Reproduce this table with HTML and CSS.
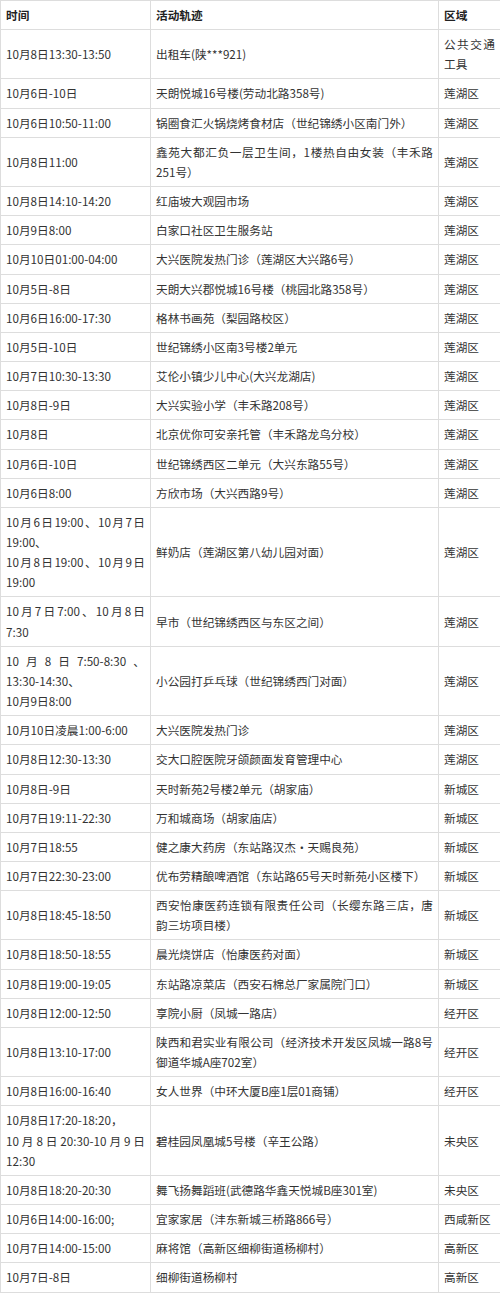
FILE: index.html
```html
<!DOCTYPE html>
<html lang="zh-CN">
<head>
<meta charset="utf-8">
<title>活动轨迹</title>
<link rel="stylesheet" href="styles.css">
</head>
<body>
<table class="trace">
  <colgroup>
    <col class="c-time">
    <col class="c-place">
    <col class="c-area">
  </colgroup>
  <thead>
    <tr><th>时间</th><th>活动轨迹</th><th>区域</th></tr>
  </thead>
  <tbody>
    <tr><td>10月8日13:30-13:50</td><td>出租车(陕***921)</td><td>公共交通工具</td></tr>
    <tr><td>10月6日-10日</td><td>天朗悦城16号楼(劳动北路358号)</td><td>莲湖区</td></tr>
    <tr><td>10月6日10:50-11:00</td><td>锅圈食汇火锅烧烤食材店（世纪锦绣小区南门外）</td><td>莲湖区</td></tr>
    <tr><td>10月8日11:00</td><td>鑫苑大都汇负一层卫生间，1楼热自由女装（丰禾路251号）</td><td>莲湖区</td></tr>
    <tr><td>10月8日14:10-14:20</td><td>红庙坡大观园市场</td><td>莲湖区</td></tr>
    <tr><td>10月9日8:00</td><td>白家口社区卫生服务站</td><td>莲湖区</td></tr>
    <tr><td>10月10日01:00-04:00</td><td>大兴医院发热门诊（莲湖区大兴路6号）</td><td>莲湖区</td></tr>
    <tr><td>10月5日-8日</td><td>天朗大兴郡悦城16号楼（桃园北路358号）</td><td>莲湖区</td></tr>
    <tr><td>10月6日16:00-17:30</td><td>格林书画苑（梨园路校区）</td><td>莲湖区</td></tr>
    <tr><td>10月5日-10日</td><td>世纪锦绣小区南3号楼2单元</td><td>莲湖区</td></tr>
    <tr><td>10月7日10:30-13:30</td><td>艾伦小镇少儿中心(大兴龙湖店)</td><td>莲湖区</td></tr>
    <tr><td>10月8日-9日</td><td>大兴实验小学（丰禾路208号）</td><td>莲湖区</td></tr>
    <tr><td>10月8日</td><td>北京优你可安亲托管（丰禾路龙鸟分校）</td><td>莲湖区</td></tr>
    <tr><td>10月6日-10日</td><td>世纪锦绣西区二单元（大兴东路55号）</td><td>莲湖区</td></tr>
    <tr><td>10月6日8:00</td><td>方欣市场（大兴西路9号）</td><td>莲湖区</td></tr>
    <tr><td>10月6日19:00、10月7日19:00、<br>10月8日19:00、10月9日19:00</td><td>鲜奶店（莲湖区第八幼儿园对面）</td><td>莲湖区</td></tr>
    <tr><td>10月7日7:00、10月8日7:30</td><td>早市（世纪锦绣西区与东区之间）</td><td>莲湖区</td></tr>
    <tr><td>10月8日7:50-8:30、<span class="nb">13:30-14:30、</span><br>10月9日8:00</td><td>小公园打乒乓球（世纪锦绣西门对面）</td><td>莲湖区</td></tr>
    <tr><td>10月10日凌晨1:00-6:00</td><td>大兴医院发热门诊</td><td>莲湖区</td></tr>
    <tr><td>10月8日12:30-13:30</td><td>交大口腔医院牙颌颜面发育管理中心</td><td>莲湖区</td></tr>
    <tr><td>10月8日-9日</td><td>天时新苑2号楼2单元（胡家庙）</td><td>新城区</td></tr>
    <tr><td>10月7日19:11-22:30</td><td>万和城商场（胡家庙店）</td><td>新城区</td></tr>
    <tr><td>10月7日18:55</td><td>健之康大药房（东站路汉杰·天赐良苑）</td><td>新城区</td></tr>
    <tr><td>10月7日22:30-23:00</td><td>优布劳精酿啤酒馆（东站路65号天时新苑小区楼下）</td><td>新城区</td></tr>
    <tr><td>10月8日18:45-18:50</td><td>西安怡康医药连锁有限责任公司（长缨东路三店，唐韵三坊项目楼）</td><td>新城区</td></tr>
    <tr><td>10月8日18:50-18:55</td><td>晨光烧饼店（怡康医药对面）</td><td>新城区</td></tr>
    <tr><td>10月8日19:00-19:05</td><td>东站路凉菜店（西安石棉总厂家属院门口）</td><td>新城区</td></tr>
    <tr><td>10月8日12:00-12:50</td><td>享院小厨（凤城一路店）</td><td>经开区</td></tr>
    <tr><td>10月8日13:10-17:00</td><td>陕西和君实业有限公司（经济技术开发区凤城一路8号御道华城A座702室）</td><td>经开区</td></tr>
    <tr><td>10月8日16:00-16:40</td><td>女人世界（中环大厦B座1层01商铺）</td><td>经开区</td></tr>
    <tr><td>10月8日17:20-18:20，<br>10月8日20:30-10月9日12:30</td><td>碧桂园凤凰城5号楼（辛王公路）</td><td>未央区</td></tr>
    <tr><td>10月8日18:20-20:30</td><td>舞飞扬舞蹈班(武德路华鑫天悦城B座301室)</td><td>未央区</td></tr>
    <tr><td>10月6日14:00-16:00;</td><td>宜家家居（沣东新城三桥路866号）</td><td>西咸新区</td></tr>
    <tr><td>10月7日14:00-15:00</td><td>麻将馆（高新区细柳街道杨柳村）</td><td>高新区</td></tr>
    <tr><td>10月7日-8日</td><td>细柳街道杨柳村</td><td>高新区</td></tr>
  </tbody>
</table>
</body>
</html>
```

FILE: styles.css
```css
html, body {
  margin: 0;
  padding: 0;
  background: #ffffff;
}

body {
  font-family: "Noto Sans CJK SC", "Microsoft YaHei", sans-serif;
  font-size: 11.67px;
  line-height: 20.15px;
  color: #333333;
}

.trace {
  width: 500px;
  border-collapse: collapse;
  table-layout: fixed;
}

.c-time { width: 150px; }
.c-place { width: 288px; }
.c-area { width: 62px; }

.trace th,
.trace td {
  border: 1px solid #dddddd;
  padding: 4px 5px;
  vertical-align: middle;
  text-align: justify;
  word-break: normal;
}

.trace th {
  font-weight: bold;
  color: #222222;
}

.nb {
  white-space: nowrap;
}
```
